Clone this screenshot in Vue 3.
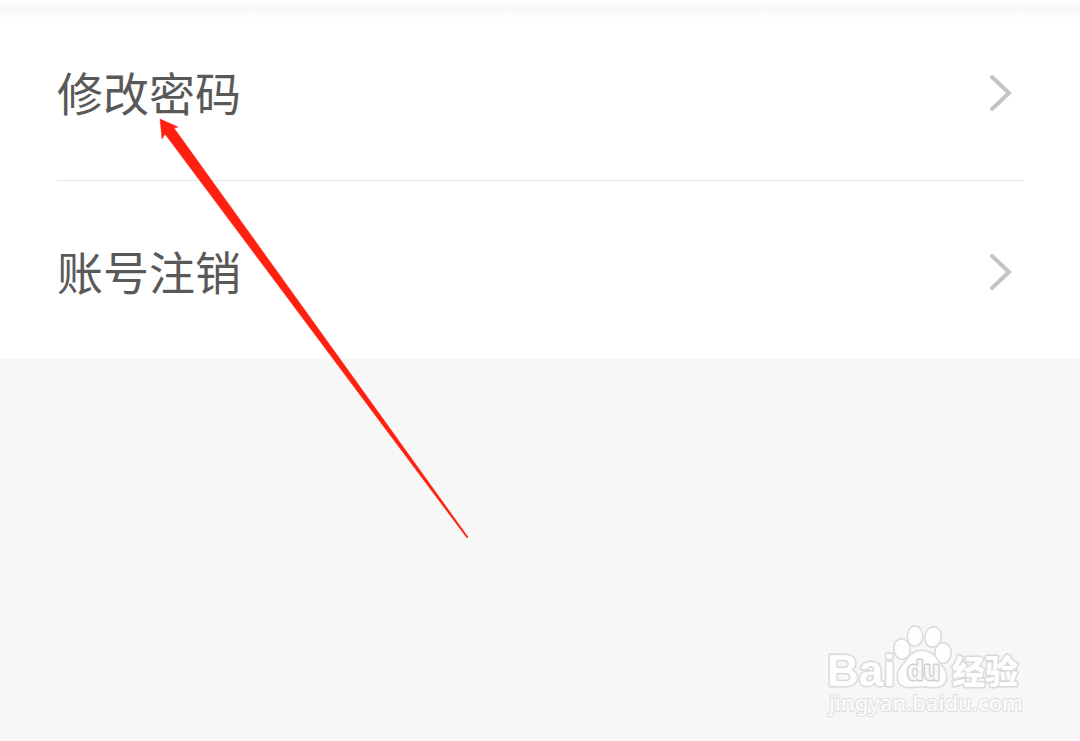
<script setup>
const items = ['修改密码', '账号注销']
</script>

<template>
  <main class="page">
    <nav class="list" aria-label="账号设置">
      <a v-for="item in items" :key="item" class="row" href="#">
        <span>{{ item }}</span>
        <svg class="chevron" viewBox="0 0 24 40" aria-hidden="true">
          <path d="M3 4 20 20 3 36" />
        </svg>
      </a>
    </nav>

    <svg class="arrow" viewBox="0 0 310 421" aria-hidden="true">
      <path d="M1 1 19 9 15 10 309 419 308 420 6 16 3 21Z" />
    </svg>

    <svg class="watermark" viewBox="0 0 210 104" role="img" aria-label="Baidu 经验">
      <g class="outlined">
        <text class="brand" x="7" y="66">Bai</text>
        <ellipse cx="82" cy="29" rx="7.500" ry="9.500" transform="rotate(-8 82 29)" />
        <ellipse cx="95" cy="16" rx="7" ry="9.500" />
        <ellipse cx="113" cy="17" rx="7.500" ry="9.500" transform="rotate(12 113 17)" />
        <ellipse cx="123" cy="33" rx="7.500" ry="9.500" />
        <path d="M102 31C95 31 90 35 87 40C83 46 78 49 78 57C78 63 82 67 89 67C94 67 97 66 102 66C107 66 110 67 115 67C122 67 126 63 126 57C126 49 121 46 117 40C114 35 109 31 102 31Z" />
        <text class="du" x="87" y="60">du</text>
        <text class="cjk" x="132" y="64">经验</text>
      </g>
      <text class="url" x="9" y="91">jingyan.baidu.com</text>
    </svg>
  </main>
</template>

<style>
body {
  margin: 0;
  background: #f7f7f7;
}
</style>

<style scoped>
.page {
  position: relative;
  min-height: 100vh;
  overflow: hidden;
  background: #f7f7f7;
  font-family: "Noto Sans CJK SC", sans-serif;
}

.list {
  padding: 2px 56px 0 57px;
  background: linear-gradient(#fefefe 0 3px, #f8f8f8 3px 9px, #fbfbfb 13px, #fefefe 22px, #fff 28px);
}

.row {
  display: flex;
  align-items: center;
  justify-content: space-between;
  height: 178px;
  padding-right: 11px;
  color: #595959;
  font-size: 46px;
  line-height: 68px;
  text-decoration: none;
}

.row + .row {
  border-top: 1px solid #e8e8e8;
}

.chevron {
  width: 24px;
  height: 40px;
  margin-top: 3px;
  fill: none;
  stroke: #c4c4c4;
  stroke-width: 4;
  stroke-linecap: round;
}

.arrow {
  position: absolute;
  top: 118px;
  left: 159px;
  width: 310px;
  height: 421px;
  fill: #ff2010;
  stroke: #ff2010;
  stroke-width: 0.5;
}

.watermark {
  position: absolute;
  right: 50px;
  bottom: 17px;
  width: 210px;
  height: 104px;
  font-family: "Liberation Sans", sans-serif;
}

.outlined {
  fill: #fefefe;
  stroke: #dadada;
  stroke-width: 3;
  stroke-linejoin: round;
  paint-order: stroke;
}

.brand {
  font-size: 44px;
  font-weight: 700;
}

.du {
  font-size: 27px;
  font-weight: 700;
  fill: #f7f7f7;
  stroke: #d0d0d0;
}

.cjk {
  font-family: "Noto Sans CJK SC", sans-serif;
  font-size: 33px;
  font-weight: 900;
}

.url {
  font-family: "Noto Sans", sans-serif;
  font-size: 22px;
  font-weight: 500;
  fill: #fcfcfc;
  stroke: #dedede;
  stroke-width: 2;
  stroke-linejoin: round;
  paint-order: stroke;
}
</style>
